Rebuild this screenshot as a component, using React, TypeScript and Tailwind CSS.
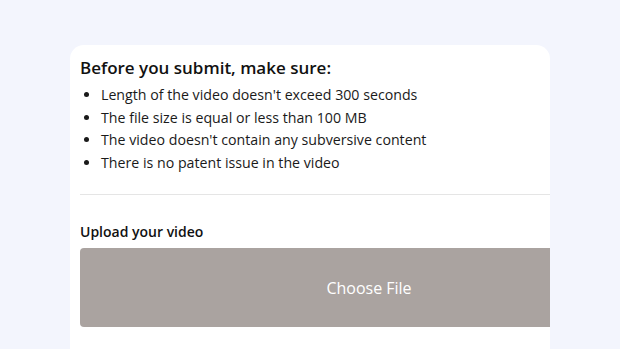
const RULES = [
  "Length of the video doesn't exceed 300 seconds",
  'The file size is equal or less than 100 MB',
  "The video doesn't contain any subversive content",
  'There is no patent issue in the video',
];

export default function App() {
  return (
    <div className="h-[349px] overflow-hidden bg-[#f3f5fd] pt-[45px] pl-[70px]" style={{ fontFamily: '"Open Sans", Lato, sans-serif' }}>
      <div className="w-[480px] h-[320px] bg-white rounded-t-[14px] overflow-hidden pl-[10px] pt-[10px]">
        <h2 className="text-[17px] leading-[26px] font-semibold text-[#111]">Before you submit, make sure:</h2>
        <ul className="mt-[3px] pl-[21px] list-disc text-[14.2px] leading-[22.5px] text-[#1a1a1a]">
          {RULES.map(r => (
            <li key={r}>{r}</li>
          ))}
        </ul>
        <div className="mt-[20px] w-[500px] border-t border-[#e5e5e5]" />
        <p className="mt-[27px] text-[14px] leading-[20px] font-semibold text-[#111]">Upload your video</p>
        <div className="mt-[6px] w-[578px] h-[79px] rounded-[4px] bg-[#aaa3a0] flex items-center justify-center">
          <span className="text-[16px] text-white" style={{ fontFamily: '"Open Sans", sans-serif' }}>Choose File</span>
        </div>
      </div>
    </div>
  );
}
